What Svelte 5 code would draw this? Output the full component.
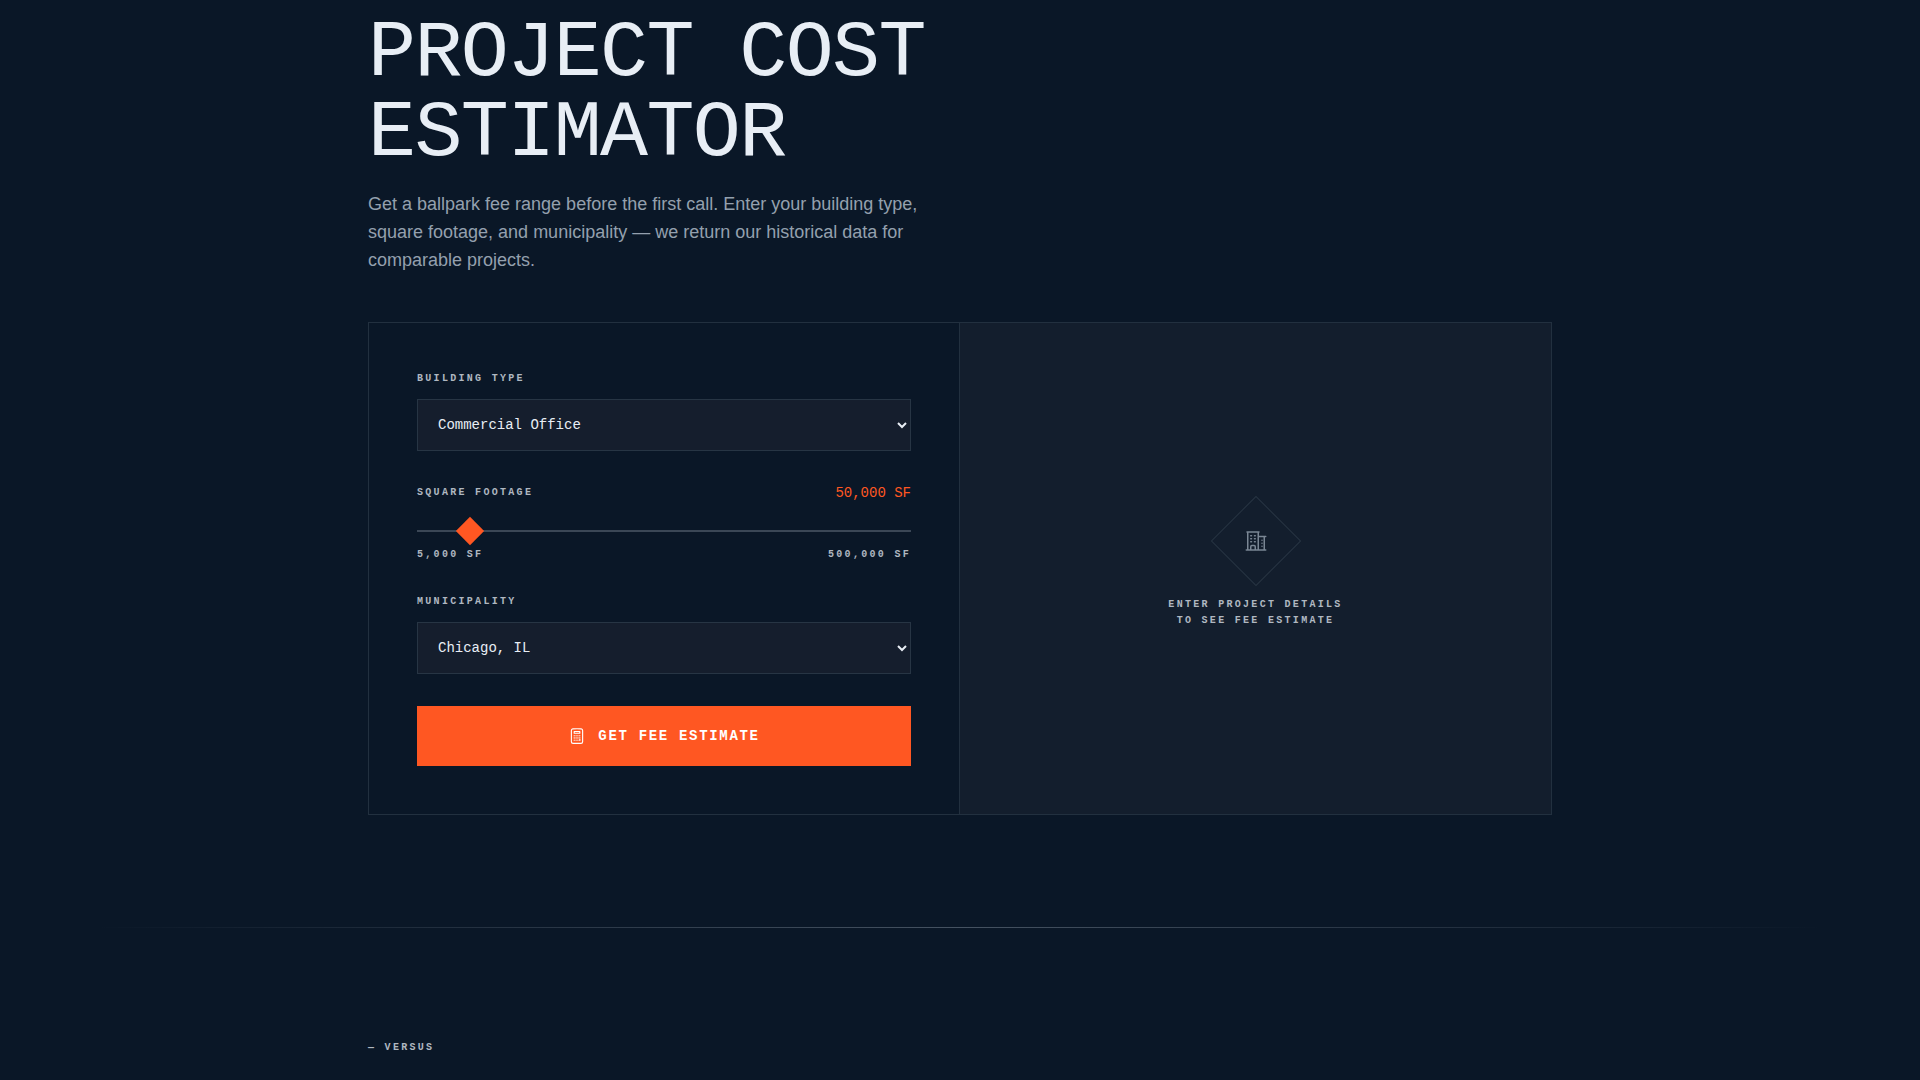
<script>
  const MIN = 5000;
  const MAX = 500000;

  let buildingType = $state('Commercial Office');
  let squareFootage = $state(50000);
  let municipality = $state('Chicago, IL');

  const buildingTypes = ['Commercial Office', 'Multifamily Residential', 'Mixed-Use', 'Industrial'];
  const municipalities = ['Chicago, IL', 'Evanston, IL', 'Milwaukee, WI', 'Indianapolis, IN'];

  const formatSf = (n) => `${n.toLocaleString('en-US')} SF`;
</script>

<main>
  <section class="estimator">
    <div class="container">
      <h1>Project Cost Estimator</h1>
      <p class="lead">
        Get a ballpark fee range before the first call. Enter your building type, square footage,
        and municipality — we return our historical data for comparable projects.
      </p>

      <div class="card">
        <form class="form" onsubmit={(e) => e.preventDefault()}>
          <div class="field">
            <label class="caption" for="building-type">Building Type</label>
            <select id="building-type" bind:value={buildingType}>
              {#each buildingTypes as type}
                <option>{type}</option>
              {/each}
            </select>
          </div>

          <div class="field">
            <div class="field-head">
              <label class="caption" for="square-footage">Square Footage</label>
              <output for="square-footage">{formatSf(squareFootage)}</output>
            </div>
            <div class="slider">
              <input
                id="square-footage"
                type="range"
                min={MIN}
                max={MAX}
                step="1000"
                bind:value={squareFootage}
              />
              <div class="bounds">
                <span class="caption">{formatSf(MIN)}</span>
                <span class="caption">{formatSf(MAX)}</span>
              </div>
            </div>
          </div>

          <div class="field">
            <label class="caption" for="municipality">Municipality</label>
            <select id="municipality" bind:value={municipality}>
              {#each municipalities as city}
                <option>{city}</option>
              {/each}
            </select>
          </div>

          <button type="submit">
            <svg class="icon-small" viewBox="0 0 24 24" aria-hidden="true">
              <path
                d="M15.75 15.75V18m-7.5-6.75h.008v.008H8.25v-.008zm0 2.25h.008v.008H8.25V13.5zm0 2.25h.008v.008H8.25v-.008zm0 2.25h.008v.008H8.25V18zm2.498-6.75h.007v.008h-.007v-.008zm0 2.25h.007v.008h-.007V13.5zm0 2.25h.007v.008h-.007v-.008zm0 2.25h.007v.008h-.007V18zm2.504-6.75h.008v.008h-.008v-.008zm0 2.25h.008v.008h-.008V13.5zm0 2.25h.008v.008h-.008v-.008zm0 2.25h.008v.008h-.008V18zm2.498-6.75h.008v.008h-.008v-.008zm0 2.25h.008v.008h-.008V13.5zM8.25 6h7.5v2.25h-7.5V6zM12 2.25c-1.892 0-3.758.11-5.593.322C5.307 2.7 4.5 3.65 4.5 4.757V19.5a2.25 2.25 0 002.25 2.25h10.5a2.25 2.25 0 002.25-2.25V4.757c0-1.108-.806-2.057-1.907-2.185A48.507 48.507 0 0012 2.25z"
              />
            </svg>
            Get Fee Estimate
          </button>
        </form>

        <div class="result">
          <div class="diamond">
            <svg class="icon-large" viewBox="0 0 24 24" aria-hidden="true">
              <path
                d="M2.25 21h19.5m-18-18v18m10.5-18v18m6-13.5V21M6.75 6.75h.75m-.75 3h.75m-.75 3h.75m3-6h.75m-.75 3h.75m-.75 3h.75M6.75 21v-3.375c0-.621.504-1.125 1.125-1.125h2.25c.621 0 1.125.504 1.125 1.125V21M3 3h12m-.75 4.5h7.5m-3.75 3.75h.008v.008h-.008v-.008zm0 3h.008v.008h-.008v-.008zm0 3h.008v.008h-.008v-.008z"
              />
            </svg>
          </div>
          <p class="caption">Enter project details<br />to see fee estimate</p>
        </div>
      </div>
    </div>
  </section>

  <hr />

  <section class="versus">
    <div class="container">
      <p class="caption">— Versus</p>
    </div>
  </section>
</main>

<style>
  :global(body) {
    background: #0a1727;
  }

  main {
    --mono: 'Liberation Mono', 'Courier New', monospace;
    --line: #22303f;
    --surface: #131e2d;
    --text: #e8eef5;
    --accent: #ff5722;
    color: var(--text);
    font-family: 'Liberation Sans', Arial, sans-serif;
  }

  h1,
  p {
    margin: 0;
  }

  .container {
    max-width: 1184px;
    margin: 0 auto;
  }

  .estimator {
    padding: 14px 48px 112px;
  }

  h1 {
    max-width: 600px;
    margin-bottom: 16px;
    font: 400 80px/80px var(--mono);
    letter-spacing: -0.02em;
    text-transform: uppercase;
  }

  .lead {
    max-width: 560px;
    margin-bottom: 48px;
    color: #94a0ae;
    font-size: 18px;
    line-height: 28px;
  }

  .caption {
    color: #b0b8c1;
    font: 700 10px/16px var(--mono);
    letter-spacing: 0.23em;
    text-transform: uppercase;
  }

  .card {
    display: grid;
    grid-template-columns: 1fr 1fr;
    border: 1px solid var(--line);
  }

  .form {
    display: flex;
    flex-direction: column;
    gap: 32px;
    padding: 48px;
    border-right: 1px solid var(--line);
  }

  .field {
    display: flex;
    flex-direction: column;
    gap: 12px;
  }

  .field-head,
  .bounds {
    display: flex;
    align-items: center;
    justify-content: space-between;
  }

  .bounds {
    height: 15px;
  }

  output {
    color: var(--accent);
    font: 14px/20px var(--mono);
  }

  select {
    width: 100%;
    height: 52px;
    padding: 0 16px;
    border: 1px solid #273544;
    border-radius: 0;
    background: #151e2d;
    color: var(--text);
    font: 14px/20px var(--mono);
  }

  input[type='range'] {
    appearance: none;
    display: block;
    width: 100%;
    height: 32px;
    margin: 0;
    background: transparent;
  }

  input[type='range']::-webkit-slider-runnable-track {
    height: 2px;
    background: #3b4756;
  }

  input[type='range']::-webkit-slider-thumb {
    appearance: none;
    width: 20px;
    height: 20px;
    margin-top: -9px;
    background: var(--accent);
    transform: rotate(45deg);
  }

  button {
    display: flex;
    align-items: center;
    justify-content: center;
    gap: 12px;
    height: 60px;
    border: 0;
    background: var(--accent);
    color: #fff;
    font: 700 14px/20px var(--mono);
    letter-spacing: 0.12em;
    text-transform: uppercase;
  }

  svg {
    fill: none;
    stroke: currentColor;
    stroke-width: 1.5;
    stroke-linecap: round;
    stroke-linejoin: round;
  }

  .icon-small {
    width: 18px;
    height: 18px;
  }

  .icon-large {
    width: 24px;
    height: 24px;
    transform: rotate(-45deg);
  }

  .result {
    display: flex;
    flex-direction: column;
    align-items: center;
    justify-content: center;
    gap: 24px;
    background: var(--surface);
    text-align: center;
  }

  .diamond {
    display: grid;
    place-items: center;
    box-sizing: border-box;
    width: 64px;
    height: 64px;
    border: 1px solid #273442;
    color: #7a8694;
    transform: rotate(45deg);
  }

  hr {
    height: 1px;
    margin: 0 96px;
    border: 0;
    background: linear-gradient(90deg, transparent, #455261, transparent);
  }

  .versus {
    padding: 112px 48px 24px;
  }
</style>
